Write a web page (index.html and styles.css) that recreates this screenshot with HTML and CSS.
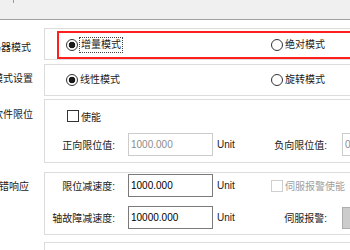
FILE: index.html
```html
<!DOCTYPE html>
<html lang="zh-CN">
<head>
  <meta charset="UTF-8">
  <title>轴参数设置</title>
  <link rel="stylesheet" href="styles.css">
</head>
<body>
  <div class="topbar"><span class="tick"></span></div>

  <div class="form">
    <div class="row row-mode">
      <div class="row-label">编码器模式</div>
      <div class="panel panel-mode">
        <div class="highlight">
          <label class="opt"><span class="radio checked"></span><span class="focus">增量模式</span></label>
          <label class="opt"><span class="radio"></span>绝对模式</label>
        </div>
      </div>
    </div>

    <div class="row row-calc">
      <div class="row-label">运算模式设置</div>
      <div class="panel panel-calc">
        <label class="opt"><span class="radio checked"></span>线性模式</label>
        <label class="opt"><span class="radio"></span>旋转模式</label>
      </div>
    </div>

    <div class="row row-limit">
      <div class="row-label">软件限位</div>
      <div class="panel panel-limit">
        <label class="check-line"><span class="checkbox"></span>使能</label>
        <div class="field-row">
          <span class="field-label">正向限位值:</span>
          <input class="num" type="text" value="1000.000" disabled>
          <span class="unit">Unit</span>
          <span class="field-label right">负向限位值:</span>
          <input class="num" type="text" value="0.000" disabled>
        </div>
      </div>
    </div>

    <div class="row row-fault">
      <div class="row-label">报错响应</div>
      <div class="panel panel-fault">
        <div class="field-row">
          <span class="field-label">限位减速度:</span>
          <input class="num" type="text" value="1000.000">
          <span class="unit">Unit</span>
          <label class="check-inline off"><span class="checkbox disabled"></span>伺服报警使能</label>
        </div>
        <div class="field-row">
          <span class="field-label">轴故障减速度:</span>
          <input class="num" type="text" value="10000.000">
          <span class="unit">Unit</span>
          <span class="field-label right">伺服报警:</span>
          <span class="alarm"></span>
        </div>
      </div>
    </div>

    <div class="row row-last">
      <div class="row-label"></div>
      <div class="panel panel-last"></div>
    </div>
  </div>
</body>
</html>
```

FILE: styles.css
```css
* { box-sizing: border-box; }
body {
  margin: 0;
  width: 350px;
  height: 250px;
  overflow: hidden;
  background: #fff;
  color: #1a1a1a;
  font-family: "Liberation Sans", "Noto Sans CJK SC", sans-serif;
  font-size: 10px;
}
.topbar {
  display: flex;
  height: 20px;
  background: #f0f0f0;
  border-bottom: 1px solid #a0a0a0;
}
.tick {
  width: 1px;
  height: 3px;
  margin-left: 13px;
  background: #9a9a9a;
}
.form {
  padding-top: 8px;
}
.row {
  display: flex;
  align-items: flex-start;
}
.row-label {
  flex: none;
  width: 34px;
  padding-right: 1px;
  display: flex;
  justify-content: flex-end;
  white-space: nowrap;
  line-height: 14px;
}
.panel {
  flex: none;
  width: 340px;
  margin-left: 10px;
  border: 1px solid #dcdcdc;
}

/* rows */
.row-mode { margin-bottom: 4px; }
.row-mode .row-label { padding-top: 13px; padding-right: 3px; }
.panel-mode { height: 32px; padding: 2px 0 0 12px; }

.row-calc { margin-bottom: 3px; }
.row-calc .row-label { padding-top: 8px; }
.panel-calc {
  height: 32px;
  display: flex;
  align-items: center;
  padding-left: 21px;
}

.row-limit { margin-bottom: 9px; }
.row-limit .row-label { padding-top: 9px; }
.panel-limit { height: 64px; padding-top: 9px; }

.row-fault { margin-bottom: 7px; }
.row-fault .row-label { padding-top: 8px; padding-right: 5px; }
.panel-fault { height: 63px; padding-top: 1px; }
.panel-fault .field-row + .field-row { margin-top: 9px; }

.panel-last { height: 30px; }

/* radios */
.highlight {
  display: flex;
  align-items: center;
  height: 28px;
  padding-left: 7px;
  border: 2px solid #ff1f1f;
}
.opt {
  display: flex;
  align-items: center;
  width: 205px;
  flex: none;
  line-height: 14px;
}
.radio {
  flex: none;
  width: 12px;
  height: 12px;
  margin-right: 2px;
  border: 1px solid #333;
  border-radius: 50%;
  background: #fff;
}
.radio.checked {
  background: radial-gradient(circle, #1a1a1a 0 3px, #fff 3.6px);
}
.focus {
  outline: 1px dotted #444;
  padding: 0 1px;
}

/* checkboxes */
.check-line {
  display: flex;
  align-items: center;
  height: 14px;
  padding-left: 22px;
  margin-bottom: 10px;
}
.checkbox {
  flex: none;
  width: 12px;
  height: 12px;
  margin-right: 2px;
  border: 1px solid #333;
  background: #fff;
}
.checkbox.disabled { border-color: #cfcfcf; }
.check-inline {
  display: flex;
  align-items: center;
  margin-left: 14px;
  white-space: nowrap;
}
.check-inline.off { color: #a0a0a0; }

/* fields */
.field-row {
  display: flex;
  align-items: center;
  height: 23px;
}
.field-label {
  flex: none;
  width: 70px;
  margin-right: 13px;
  text-align: right;
  white-space: nowrap;
}
.field-label.right { margin-right: 15px; }
.num {
  flex: none;
  width: 85px;
  height: 23px;
  margin: 0;
  padding: 0 0 0 2px;
  border: 1px solid #7a7a7a;
  background: #fff;
  color: #000;
  font: inherit;
}
.num:disabled {
  border-color: #cccccc;
  color: #8c8c8c;
}
.unit {
  flex: none;
  width: 40px;
  margin-left: 4px;
}
.alarm {
  flex: none;
  width: 30px;
  height: 22px;
  background: #cccccc;
  border: 1px solid #adadad;
}
```
